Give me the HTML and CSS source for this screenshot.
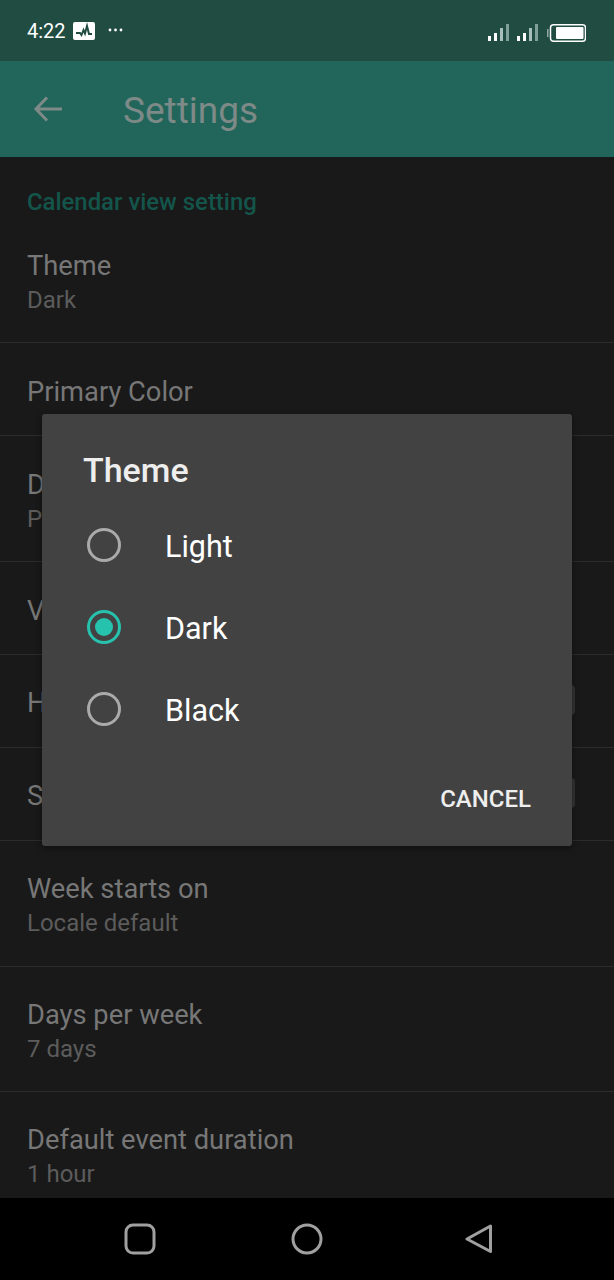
FILE: index.html
```html
<!DOCTYPE html>
<html lang="en">
<head>
  <meta charset="UTF-8">
  <meta name="viewport" content="width=device-width, initial-scale=1.0">
  <title>Settings</title>
  <link rel="stylesheet" href="styles.css">
</head>
<body>
  <div class="status-bar">
    <div class="status-left">
      <span class="clock">4:22</span>
      <svg class="pulse" width="22" height="18" viewBox="0 0 22 18">
        <rect width="22" height="18" rx="2" fill="#fff"/>
        <path d="M3 11H7L8.500 13L10.500 8L12 11.500L14 4L16 12H19" fill="none" stroke="#204c42" stroke-width="2"/>
      </svg>
      <svg class="dots" width="15" height="4" viewBox="0 0 15 4">
        <circle cx="2" cy="2" r="1.400" fill="#fff"/>
        <circle cx="7.500" cy="2" r="1.400" fill="#fff"/>
        <circle cx="13" cy="2" r="1.400" fill="#fff"/>
      </svg>
    </div>
    <div class="status-right">
      <svg width="21" height="17" viewBox="0 0 21 17">
        <rect x="0" y="12" width="3" height="5" fill="#fff"/>
        <rect x="6" y="9" width="3" height="8" fill="#fff"/>
        <rect x="12" y="4" width="3" height="13" fill="#a9bfb9"/>
        <rect x="18" y="0" width="3" height="17" fill="#7f9f97"/>
      </svg>
      <svg width="21" height="17" viewBox="0 0 21 17">
        <rect x="0" y="12" width="3" height="5" fill="#fff"/>
        <rect x="6" y="9" width="3" height="8" fill="#fff"/>
        <rect x="12" y="4" width="3" height="13" fill="#a9bfb9"/>
        <rect x="18" y="0" width="3" height="17" fill="#7f9f97"/>
      </svg>
      <svg class="battery" width="39" height="18" viewBox="0 0 39 18">
        <rect x="0" y="5" width="1.500" height="8" fill="#8fa8a1"/>
        <rect x="3.500" y="0.750" width="35" height="16.500" rx="3" fill="none" stroke="#fff" stroke-width="1.500"/>
        <rect x="9" y="3" width="27.500" height="12" rx="1" fill="#fff"/>
      </svg>
    </div>
  </div>

  <div class="app-bar">
    <svg class="back" width="30" height="28" viewBox="0 0 30 28">
      <path d="M29 14H3M14 2.500L3 14L14 25.500" fill="none" stroke="#7d8a87" stroke-width="3"/>
    </svg>
    <h1>Settings</h1>
  </div>

  <div class="list">
    <div class="section-title">Calendar view setting</div>
    <div class="row">
      <div class="row-title">Theme</div>
      <div class="row-sub">Dark</div>
    </div>
    <div class="row single">
      <div class="row-title">Primary Color</div>
    </div>
    <div class="row">
      <div class="row-title">D</div>
      <div class="row-sub">P</div>
    </div>
    <div class="row single">
      <div class="row-title">V</div>
    </div>
    <div class="row single tight">
      <div class="row-title">H</div>
      <span class="switch"></span>
    </div>
    <div class="row single tight">
      <div class="row-title">S</div>
      <span class="switch"></span>
    </div>
    <div class="row tight">
      <div class="row-title">Week starts on</div>
      <div class="row-sub">Locale default</div>
    </div>
    <div class="row short tight">
      <div class="row-title">Days per week</div>
      <div class="row-sub">7 days</div>
    </div>
    <div class="row last tight">
      <div class="row-title">Default event duration</div>
      <div class="row-sub">1 hour</div>
    </div>

    <div class="dialog">
      <h2>Theme</h2>
      <div class="option">
        <span class="radio"></span>
        <span class="option-label">Light</span>
      </div>
      <div class="option">
        <span class="radio checked"></span>
        <span class="option-label">Dark</span>
      </div>
      <div class="option">
        <span class="radio"></span>
        <span class="option-label">Black</span>
      </div>
      <div class="dialog-actions">
        <span class="cancel">CANCEL</span>
      </div>
    </div>
  </div>

  <div class="nav-bar">
    <svg class="nav-square" width="32" height="32" viewBox="0 0 32 32">
      <rect x="2" y="2" width="28" height="28" rx="7" fill="none" stroke="#a0a0a0" stroke-width="3"/>
    </svg>
    <svg class="nav-circle" width="32" height="32" viewBox="0 0 32 32">
      <circle cx="16" cy="16" r="14" fill="none" stroke="#a0a0a0" stroke-width="3"/>
    </svg>
    <svg width="28" height="32" viewBox="0 0 28 32">
      <path d="M25.500 3V28.500L2 16Z" fill="none" stroke="#a0a0a0" stroke-width="3" stroke-linejoin="round"/>
    </svg>
  </div>
</body>
</html>
```

FILE: styles.css
```css
* {
  margin: 0;
  padding: 0;
  box-sizing: border-box;
}

body {
  font-family: Roboto, sans-serif;
  background-color: #191919;
  width: 614px;
  height: 1280px;
  display: flex;
  flex-direction: column;
  overflow: hidden;
}

.status-bar {
  height: 61px;
  flex-shrink: 0;
  background-color: #204c42;
  display: flex;
  justify-content: space-between;
  align-items: center;
  padding: 0 28px 0 27px;
}

.status-left {
  display: flex;
  align-items: center;
  color: #fff;
}

.clock {
  font-size: 20px;
  margin-right: 7px;
}

.pulse {
  margin-right: 13px;
}

.dots {
  margin-bottom: 2px;
}

.status-right {
  display: flex;
  align-items: center;
  gap: 8px;
  padding-top: 4px;
}

.battery {
  margin-left: 1px;
}

.app-bar {
  height: 96px;
  flex-shrink: 0;
  background-color: #22665b;
  display: flex;
  align-items: center;
  padding-left: 33px;
}

.back {
  margin-right: 60px;
}

.app-bar h1 {
  font-size: 37px;
  font-weight: 400;
  padding-top: 3px;
  color: #7d8a87;
}

.list {
  flex: 1;
  position: relative;
  overflow: hidden;
}

.section-title {
  height: 60px;
  padding: 31px 27px 0;
  font-size: 23.900px;
  font-weight: 500;
  line-height: 28px;
  color: #14554b;
}

.row {
  height: 126px;
  padding: 33px 27px 0;
  border-bottom: 1px solid #2b2b2b;
  position: relative;
}

.row.tight {
  padding-top: 32px;
}

.row.single {
  height: 93px;
}

.row.short {
  height: 125px;
}

.row.last {
  border-bottom: none;
}

.row-title {
  font-size: 27.300px;
  line-height: 32px;
  color: #777;
}

.row-sub {
  font-size: 24px;
  line-height: 28px;
  margin-top: 4px;
  color: #5c5c5c;
}

.switch {
  position: absolute;
  right: 39px;
  top: 30px;
  width: 60px;
  height: 30px;
  border-radius: 4px;
  background-color: #333;
}

.dialog {
  position: absolute;
  left: 42px;
  top: 257px;
  width: 530px;
  height: 432px;
  background-color: #424242;
  border-radius: 3px;
  box-shadow: 0 2px 6px rgba(0, 0, 0, 0.4);
  padding: 36px 41px 0 41px;
}

.dialog h2 {
  font-size: 34px;
  font-weight: 500;
  line-height: 40px;
  color: #eee;
  margin-bottom: 14px;
}

.option {
  height: 82px;
  display: flex;
  align-items: center;
  font-size: 30.500px;
  color: #fff;
}

.option-label {
  padding-top: 2px;
}

.radio {
  width: 34px;
  height: 34px;
  border: 3px solid #aaa;
  border-radius: 50%;
  margin-left: 4px;
  margin-right: 44px;
  display: flex;
  justify-content: center;
  align-items: center;
}

.radio.checked {
  border-color: #26c2ad;
}

.radio.checked::after {
  content: "";
  width: 18px;
  height: 18px;
  border-radius: 50%;
  background-color: #26c2ad;
}

.dialog-actions {
  display: flex;
  justify-content: flex-end;
  margin-top: 35px;
}

.cancel {
  font-size: 24px;
  font-weight: 500;
  color: #eee;
}

.nav-bar {
  height: 82px;
  flex-shrink: 0;
  background-color: #000;
  display: flex;
  align-items: center;
  padding-left: 124px;
}

.nav-square {
  margin-right: 135px;
}

.nav-circle {
  margin-right: 142px;
}
```
